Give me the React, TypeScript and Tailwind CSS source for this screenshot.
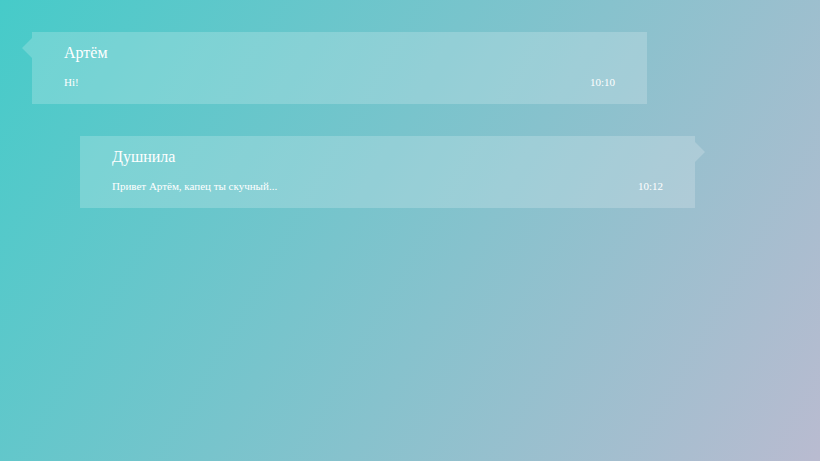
type MessageProps = {
  author: string;
  text: string;
  time: string;
  own?: boolean;
};

function Message({ author, text, time, own = false }: MessageProps) {
  return (
    <article
      className={`relative w-3/4 bg-white/20 px-8 pt-2 pb-3.5 ${own ? "ml-20" : "ml-8"}`}
    >
      <span
        aria-hidden="true"
        className={`absolute top-1.5 h-5 w-2.5 bg-white/20 ${
          own
            ? "left-full [clip-path:polygon(0_0,100%_50%,0_100%)]"
            : "right-full [clip-path:polygon(100%_0,0_50%,100%_100%)]"
        }`}
      />
      <h2 className="text-[16px] leading-[26px]">{author}</h2>
      <div className="mt-2 flex items-center justify-between text-[11px] leading-4">
        <p>{text}</p>
        <time>{time}</time>
      </div>
    </article>
  );
}

export default function App() {
  return (
    <main className="flex min-h-screen flex-col gap-8 bg-[linear-gradient(120deg,#46cbc9,#b9bbd0)] py-8 font-['Liberation_Serif',serif] text-white">
      <Message author="Артём" text="Hi!" time="10:10" />
      <Message author="Душнила" text="Привет Артём, капец ты скучный..." time="10:12" own />
    </main>
  );
}
